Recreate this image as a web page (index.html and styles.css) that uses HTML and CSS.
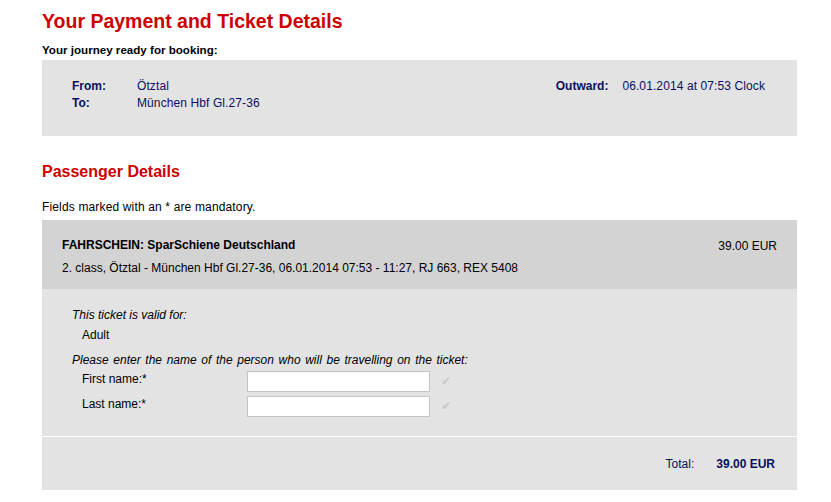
FILE: index.html
```html
<!DOCTYPE html>
<html>
<head>
<meta charset="utf-8">
<link rel="stylesheet" href="styles.css">
</head>
<body>
<div class="page">
  <h1 class="title">Your Payment and Ticket Details</h1>
  <div class="subtitle">Your journey ready for booking:</div>
  <div class="journey">
    <div class="jcol">
      <div class="jrow"><span class="jlabel">From:</span><span class="jval">Ötztal</span></div>
      <div class="jrow"><span class="jlabel">To:</span><span class="jval">München Hbf Gl.27-36</span></div>
    </div>
    <div class="jcol jright">
      <div class="jrow"><span class="jlabel2">Outward:</span><span class="jval">06.01.2014 at 07:53 Clock</span></div>
    </div>
  </div>

  <h2 class="section">Passenger Details</h2>
  <div class="note">Fields marked with an * are mandatory.</div>

  <div class="ticket">
    <div class="thead">
      <div class="tinfo">
        <div class="tname">FAHRSCHEIN: SparSchiene Deutschland</div>
        <div class="tdesc">2. class, Ötztal - München Hbf Gl.27-36, 06.01.2014 07:53 - 11:27, RJ 663, REX 5408</div>
      </div>
      <div class="tprice">39.00 EUR</div>
    </div>
    <div class="tbody">
      <div class="ital">This ticket is valid for:</div>
      <div class="indent adult">Adult</div>
      <div class="ital please">Please enter the name of the person who will be travelling on the ticket:</div>
      <div class="fields">
        <div class="frow">
          <label class="flabel">First name:*</label>
          <input class="finput" type="text">
          <span class="check">&#10004;</span>
        </div>
        <div class="frow">
          <label class="flabel">Last name:*</label>
          <input class="finput" type="text">
          <span class="check">&#10004;</span>
        </div>
      </div>
    </div>
    <div class="tfoot">
      <span class="tlabel">Total:</span>
      <span class="tamount">39.00 EUR</span>
    </div>
  </div>
</div>
</body>
</html>
```
FILE: styles.css
```css
* { box-sizing: border-box; }
html, body { margin: 0; padding: 0; background: #fff; }
body {
  font-family: "Liberation Sans", Arial, sans-serif;
  font-size: 12px;
  color: #000;
}
.page {
  width: 755px;
  margin-left: 42px;
  padding-top: 9px;
}
.title {
  margin: 0;
  font-size: 19.5px;
  line-height: 24px;
  font-weight: bold;
  color: #cc0000;
}
.subtitle {
  margin-top: 10px;
  font-weight: bold;
  font-size: 11.6px;
  line-height: 14px;
  height: 17px;
}
.journey {
  background: #e3e3e3;
  height: 76px;
  display: flex;
  justify-content: space-between;
  padding: 18px 32px 0 30px;
  color: #0a1060;
}
.jrow { display: flex; line-height: 17px; }
.jlabel { width: 65px; font-weight: bold; }
.jlabel2 { font-weight: bold; margin-right: 14px; }
.jval { letter-spacing: 0.1px; }
.section {
  margin: 26px 0 0;
  font-size: 16px;
  line-height: 20px;
  font-weight: bold;
  color: #cc0000;
}
.note {
  margin-top: 18px;
  line-height: 14px;
  height: 20px;
  letter-spacing: 0.15px;
}
.ticket { background: #e3e3e3; }
.thead {
  background: #d3d3d3;
  height: 69px;
  display: flex;
  justify-content: space-between;
  padding: 18px 20px 0 20px;
}
.tname { font-weight: bold; line-height: 14px; }
.tdesc { margin-top: 9px; line-height: 14px; }
.tprice { line-height: 14px; margin-top: 1px; }
.tbody {
  padding: 19px 30px 0 30px;
  height: 148px;
  border-bottom: 1px solid #fff;
}
.ital { font-style: italic; line-height: 14px; }
.indent { padding-left: 10px; }
.adult { margin-top: 6px; line-height: 14px; }
.please { margin-top: 11px; word-spacing: 1.3px; }
.fields { margin-top: 4px; display: flex; flex-direction: column; }
.frow {
  display: flex;
  align-items: flex-start;
  height: 25px;
  padding-left: 10px;
}
.flabel { width: 165px; line-height: 14px; padding-top: 1px; }
.finput {
  width: 183px;
  height: 21px;
  border: 1px solid #c4c4c4;
  background: #fff;
  margin: 0;
  padding: 0 3px;
}
.check {
  margin-left: 11px;
  margin-top: 3px;
  line-height: 14px;
  color: #c9c9c9;
  font-family: "DejaVu Sans", sans-serif;
  font-size: 12px;
}
.tfoot {
  height: 53px;
  display: flex;
  justify-content: flex-end;
  align-items: center;
  padding-right: 22px;
  color: #0a1060;
}
.tlabel { margin-right: 22px; }
.tamount { font-weight: bold; }
```
